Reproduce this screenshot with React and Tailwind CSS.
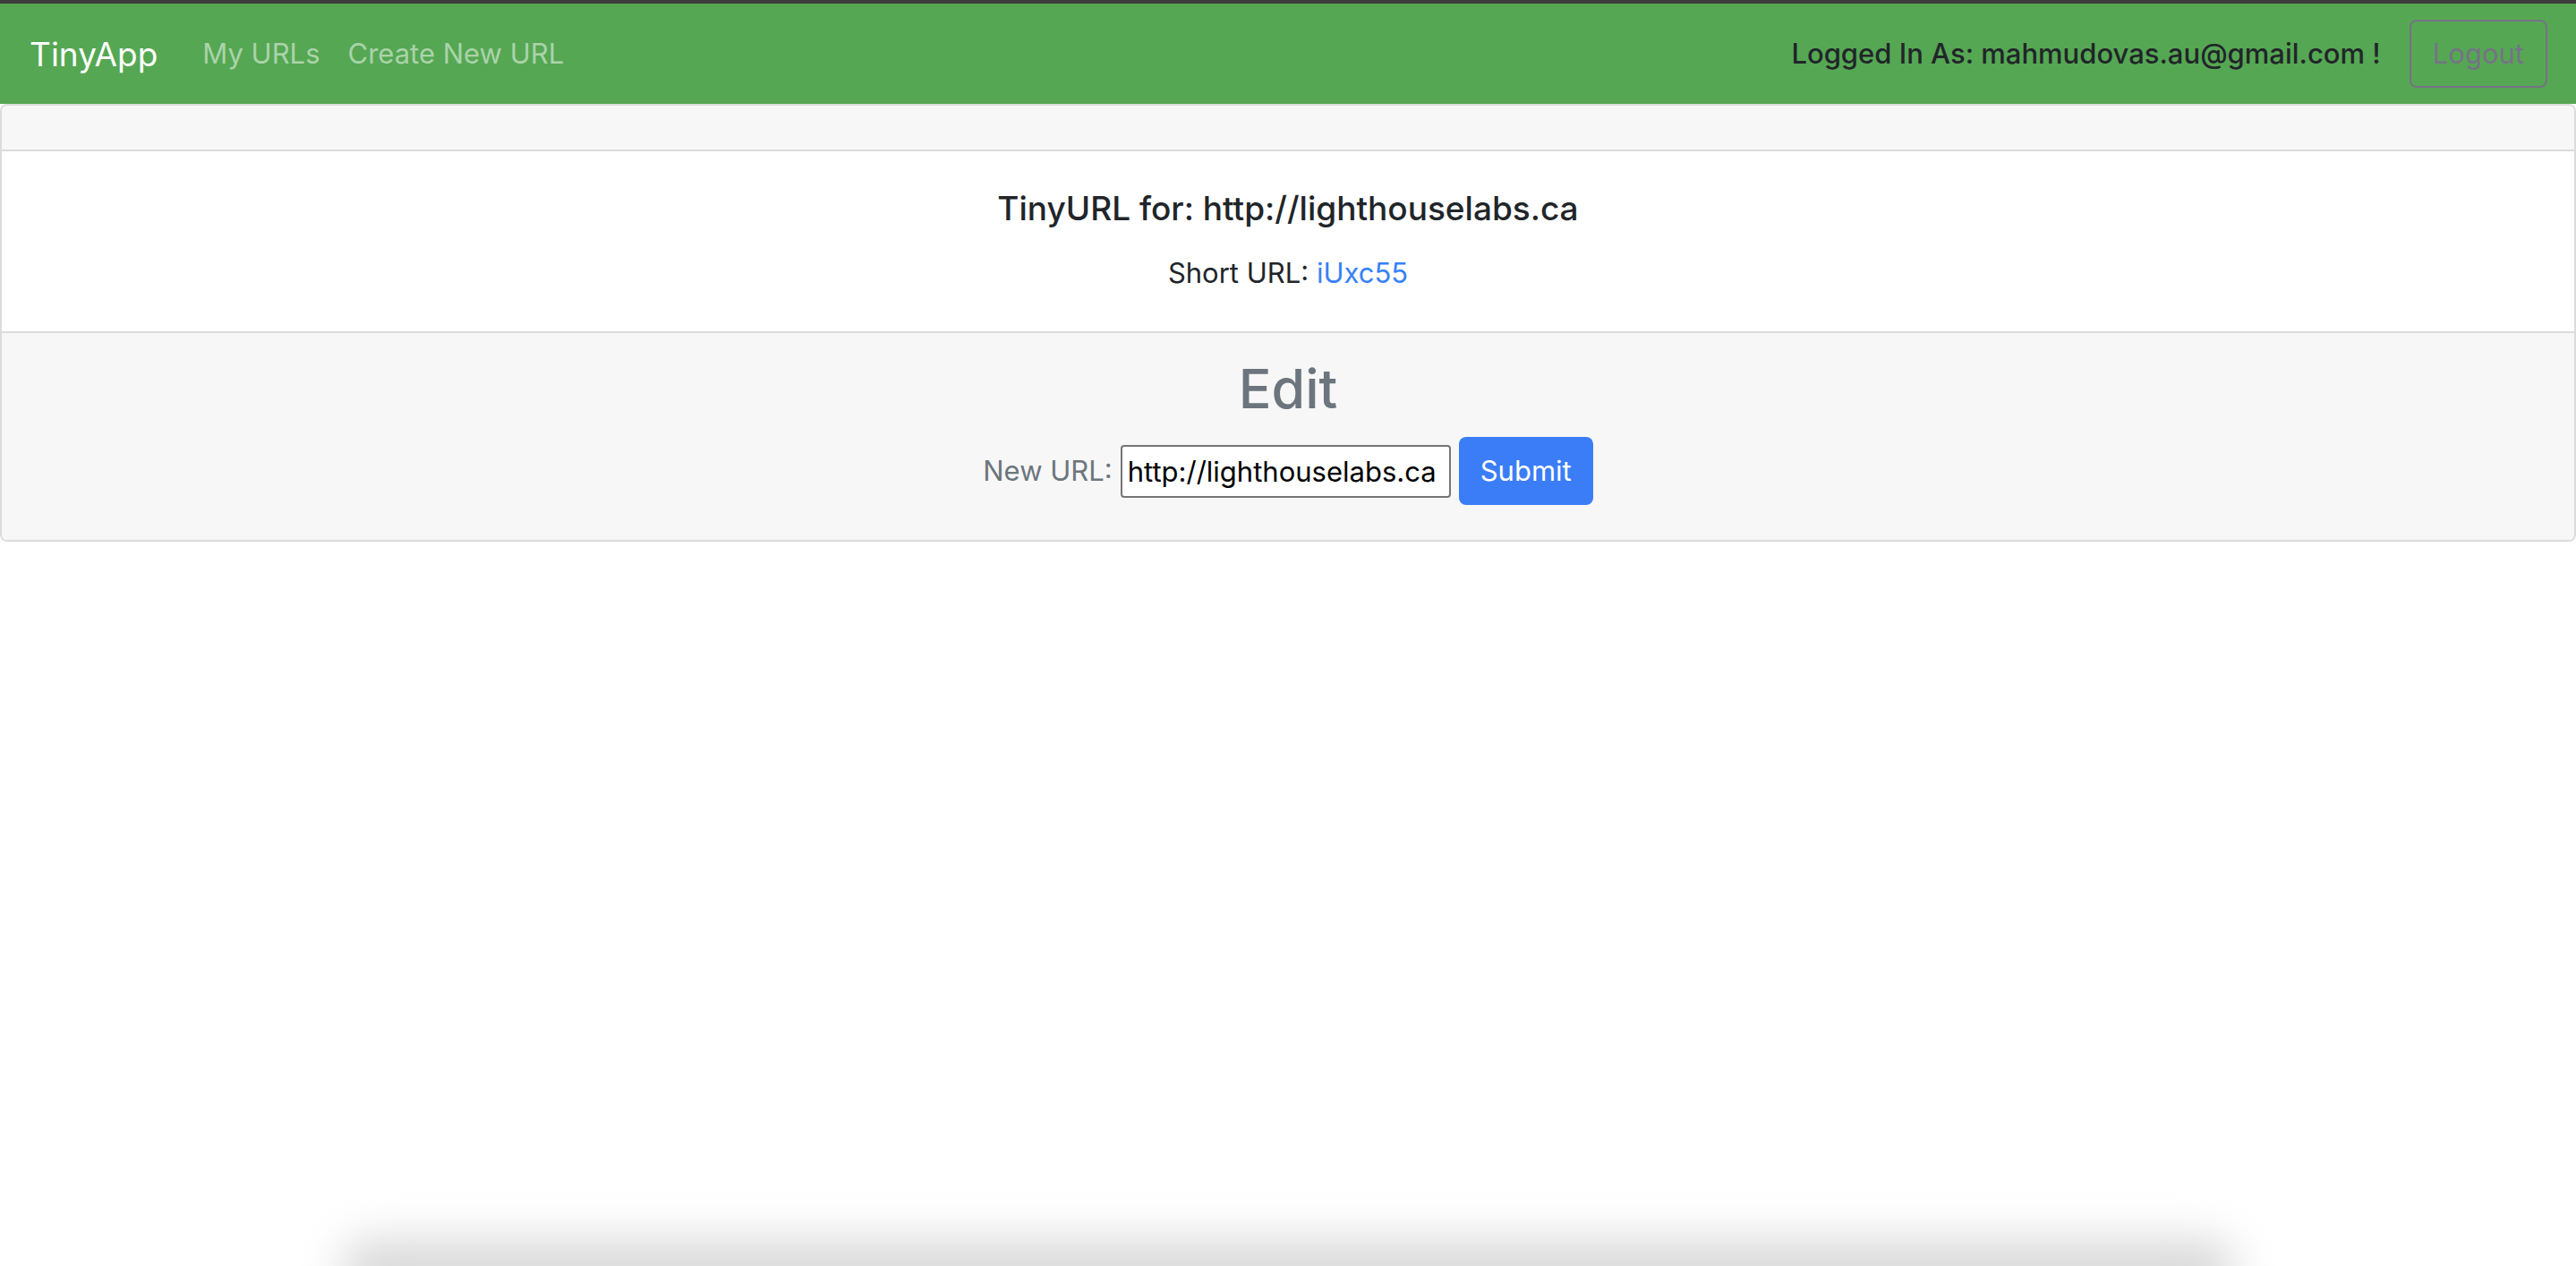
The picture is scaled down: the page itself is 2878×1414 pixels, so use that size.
import { useState } from 'react';

export default function App() {
  const [longUrl, setLongUrl] = useState('http://lighthouselabs.ca');

  return (
    <div className="relative min-h-screen overflow-hidden bg-white font-['Inter',sans-serif] text-[#212529]">
      <div className="h-[4px] bg-[#3c3c3c]" />
      <nav className="flex h-[112px] items-center bg-[#55a753] pl-[33px] pr-[32px]">
        <a href="#" className="text-[37px] leading-none text-white">
          TinyApp
        </a>
        <div className="ml-[50px] flex items-center gap-[31px] text-[31px] text-[#aad3a9]">
          <a href="#">My URLs</a>
          <a href="#">Create New URL</a>
        </div>
        <div className="ml-auto flex items-center gap-[32px]">
          <span className="text-[31px] font-medium text-[#212529]">
            Logged In As: mahmudovas.au@gmail.com !
          </span>
          <button
            type="button"
            className="h-[76px] rounded-[8px] border-2 border-[#757385] px-[24px] text-[31px] text-[#757385]"
          >
            Logout
          </button>
        </div>
      </nav>

      <main className="rounded-[8px] border-2 border-[#dcdcdc]">
        <div className="h-[51px] rounded-t-[6px] border-b-2 border-[#dcdcdc] bg-[#f7f7f7]" />
        <div className="bg-white pb-[41px] pt-[40px] text-center">
          <h5 className="text-[37px] font-medium leading-[48px]">
            TinyURL for: http://lighthouselabs.ca
          </h5>
          <p className="mt-[24px] text-[31px] leading-[48px]">
            Short URL:{' '}
            <a href="#" className="text-[#3781f6]">
              iUxc55
            </a>
          </p>
        </div>
        <div className="rounded-b-[6px] border-t-2 border-[#dcdcdc] bg-[#f7f7f7] pb-[39px] pt-[24px] text-center">
          <h2 className="text-[61px] font-medium leading-[77px] text-[#6c757d]">Edit</h2>
          <form
            onSubmit={(e) => e.preventDefault()}
            className="mt-[15px] flex items-center justify-center gap-[9px]"
          >
            <label className="text-[31px] text-[#6c757d]">New URL:</label>
            <input
              type="text"
              value={longUrl}
              onChange={(e) => setLongUrl(e.target.value)}
              className="h-[59px] w-[369px] rounded-[4px] border-2 border-[#767676] bg-white px-[6px] text-[31px] text-black"
            />
            <button
              type="submit"
              className="h-[76px] rounded-[8px] bg-[#3b7df6] px-[24px] text-[31px] text-white"
            >
              Submit
            </button>
          </form>
        </div>
      </main>

      <div className="pointer-events-none absolute bottom-[-40px] left-[380px] right-[380px] h-[70px] rounded-full bg-[#d9d9d9] blur-[24px]" />
    </div>
  );
}
